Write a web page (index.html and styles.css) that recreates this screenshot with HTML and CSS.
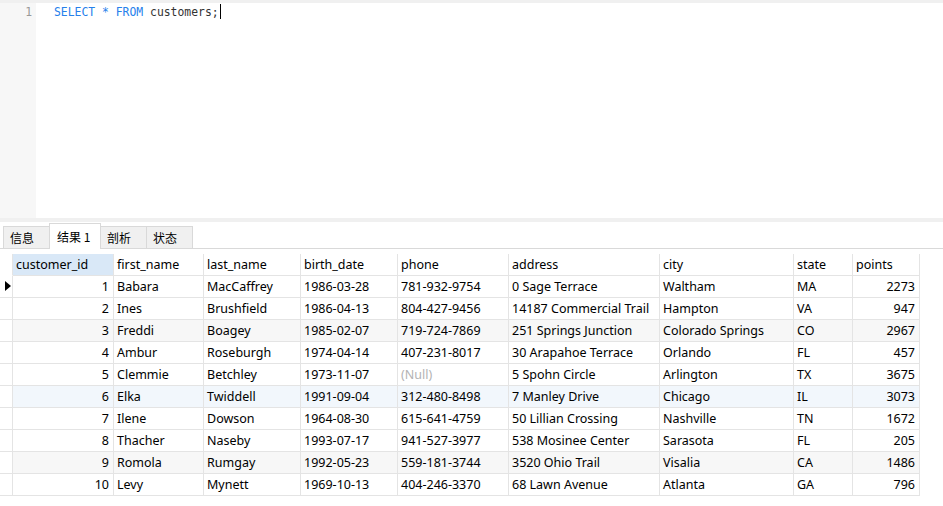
FILE: index.html
```html
<!DOCTYPE html>
<html>
<head>
<meta charset="utf-8">
<link rel="stylesheet" href="styles.css">
</head>
<body>
<div class="app">
  <div class="editor">
    <div class="gutter"><span class="ln">1</span></div>
    <div class="code"><span class="kw">SELECT</span> <span class="kw">*</span> <span class="kw">FROM</span> <span class="id">customers;</span><span class="caret"></span></div>
  </div>
  <div class="splitter"></div>
  <div class="tabbar">
    <div class="tab">信息</div>
    <div class="tab active">结果 1</div>
    <div class="tab">剖析</div>
    <div class="tab">状态</div>
  </div>
  <div class="grid-wrap">
    <div class="grid">
      <div class="row head">
        <div class="c ind"></div>
        <div class="c w1 sel">customer_id</div>
        <div class="c w2">first_name</div>
        <div class="c w3">last_name</div>
        <div class="c w4">birth_date</div>
        <div class="c w5">phone</div>
        <div class="c w6">address</div>
        <div class="c w7">city</div>
        <div class="c w8">state</div>
        <div class="c w9">points</div>
      </div>
      <div class="row">
        <div class="c ind"><span class="tri"></span></div>
        <div class="c w1 num">1</div><div class="c w2">Babara</div><div class="c w3">MacCaffrey</div><div class="c w4">1986-03-28</div><div class="c w5">781-932-9754</div><div class="c w6">0 Sage Terrace</div><div class="c w7">Waltham</div><div class="c w8">MA</div><div class="c w9 num">2273</div>
      </div>
      <div class="row">
        <div class="c ind"></div>
        <div class="c w1 num">2</div><div class="c w2">Ines</div><div class="c w3">Brushfield</div><div class="c w4">1986-04-13</div><div class="c w5">804-427-9456</div><div class="c w6">14187 Commercial Trail</div><div class="c w7">Hampton</div><div class="c w8">VA</div><div class="c w9 num">947</div>
      </div>
      <div class="row alt">
        <div class="c ind"></div>
        <div class="c w1 num">3</div><div class="c w2">Freddi</div><div class="c w3">Boagey</div><div class="c w4">1985-02-07</div><div class="c w5">719-724-7869</div><div class="c w6">251 Springs Junction</div><div class="c w7">Colorado Springs</div><div class="c w8">CO</div><div class="c w9 num">2967</div>
      </div>
      <div class="row">
        <div class="c ind"></div>
        <div class="c w1 num">4</div><div class="c w2">Ambur</div><div class="c w3">Roseburgh</div><div class="c w4">1974-04-14</div><div class="c w5">407-231-8017</div><div class="c w6">30 Arapahoe Terrace</div><div class="c w7">Orlando</div><div class="c w8">FL</div><div class="c w9 num">457</div>
      </div>
      <div class="row">
        <div class="c ind"></div>
        <div class="c w1 num">5</div><div class="c w2">Clemmie</div><div class="c w3">Betchley</div><div class="c w4">1973-11-07</div><div class="c w5 null">(Null)</div><div class="c w6">5 Spohn Circle</div><div class="c w7">Arlington</div><div class="c w8">TX</div><div class="c w9 num">3675</div>
      </div>
      <div class="row hover">
        <div class="c ind"></div>
        <div class="c w1 num">6</div><div class="c w2">Elka</div><div class="c w3">Twiddell</div><div class="c w4">1991-09-04</div><div class="c w5">312-480-8498</div><div class="c w6">7 Manley Drive</div><div class="c w7">Chicago</div><div class="c w8">IL</div><div class="c w9 num">3073</div>
      </div>
      <div class="row">
        <div class="c ind"></div>
        <div class="c w1 num">7</div><div class="c w2">Ilene</div><div class="c w3">Dowson</div><div class="c w4">1964-08-30</div><div class="c w5">615-641-4759</div><div class="c w6">50 Lillian Crossing</div><div class="c w7">Nashville</div><div class="c w8">TN</div><div class="c w9 num">1672</div>
      </div>
      <div class="row">
        <div class="c ind"></div>
        <div class="c w1 num">8</div><div class="c w2">Thacher</div><div class="c w3">Naseby</div><div class="c w4">1993-07-17</div><div class="c w5">941-527-3977</div><div class="c w6">538 Mosinee Center</div><div class="c w7">Sarasota</div><div class="c w8">FL</div><div class="c w9 num">205</div>
      </div>
      <div class="row alt">
        <div class="c ind"></div>
        <div class="c w1 num">9</div><div class="c w2">Romola</div><div class="c w3">Rumgay</div><div class="c w4">1992-05-23</div><div class="c w5">559-181-3744</div><div class="c w6">3520 Ohio Trail</div><div class="c w7">Visalia</div><div class="c w8">CA</div><div class="c w9 num">1486</div>
      </div>
      <div class="row">
        <div class="c ind"></div>
        <div class="c w1 num">10</div><div class="c w2">Levy</div><div class="c w3">Mynett</div><div class="c w4">1969-10-13</div><div class="c w5">404-246-3370</div><div class="c w6">68 Lawn Avenue</div><div class="c w7">Atlanta</div><div class="c w8">GA</div><div class="c w9 num">796</div>
      </div>
    </div>
  </div>
</div>
</body>
</html>
```

FILE: styles.css
```css
html, body {
  margin: 0;
  padding: 0;
  background: #ffffff;
}
body {
  width: 943px;
  height: 506px;
  overflow: hidden;
  font-family: "Noto Sans", "Noto Sans CJK SC", sans-serif;
  font-size: 12.5px;
  color: #000;
}
.app {
  display: flex;
  flex-direction: column;
}
.editor {
  height: 215px;
  border-top: 3px solid #f0f0f0;
  display: flex;
  background: #fff;
}
.gutter {
  width: 36px;
  background: #f7f7f7;
  display: flex;
  justify-content: flex-end;
  align-items: flex-start;
}
.ln {
  font-family: "DejaVu Sans Mono", monospace;
  font-size: 11.4px;
  color: #999;
  line-height: 18px;
  margin-right: 4px;
}
.code {
  display: block;
  padding-left: 18px;
  font-family: "DejaVu Sans Mono", monospace;
  font-size: 11.4px;
  line-height: 18px;
  color: #333;
  white-space: pre;
}
.kw { color: #2680eb; }
.id { color: #333; }
.caret {
  display: inline-block;
  width: 1px;
  height: 15px;
  background: #000;
  vertical-align: -3px;
  margin-left: 1px;
}
.splitter {
  height: 4px;
  background: #f0f0f0;
}
.tabbar {
  display: flex;
  align-items: flex-end;
  height: 26px;
  border-bottom: 1px solid #d9d9d9;
  padding-left: 3px;
  background: #fff;
}
.tab {
  box-sizing: border-box;
  height: 22px;
  padding: 0 6px;
  border: 1px solid #d9d9d9;
  border-bottom: none;
  margin-right: -1px;
  background: #f0f0f0;
  font-family: "Noto Sans CJK SC", sans-serif;
  font-size: 12px;
  line-height: 21px;
  color: #000;
  width: 47px;
}
.tab.active {
  background: #fff;
  width: 52px;
  line-height: 25px;
  padding-left: 7px;
  margin-bottom: -1px;
  height: 26px;
}
.grid-wrap {
  padding-top: 5px;
}
.grid {
  display: flex;
  flex-direction: column;
}
.row {
  display: flex;
  height: 22px;
}
.c {
  box-sizing: border-box;
  height: 22px;
  border-right: 1px solid #e4e4e4;
  border-bottom: 1px solid #e4e4e4;
  padding: 0 3px;
  line-height: 21px;
  white-space: nowrap;
  overflow: hidden;
}
.ind { width: 13px; padding: 0; position: relative; }
.head .ind { border-right: 1px solid #e4e4e4; border-bottom-color: transparent; }
.w1 { width: 101px; }
.w2 { width: 90px; }
.w3 { width: 97px; }
.w4 { width: 97px; }
.w5 { width: 111px; }
.w6 { width: 151px; }
.w7 { width: 134px; }
.w8 { width: 59px; }
.w9 { width: 67px; }
.num { text-align: right; padding-right: 4px; }
.head .sel { background: #d9e8f7; }
.alt .c { background: #f7f7f7; }
.hover .c { background: #f2f7fc; }
.row .ind { background: #fff; }
.null { color: #b3b3b3; }
.tri {
  position: absolute;
  left: 5px;
  top: 5px;
  width: 0;
  height: 0;
  border-top: 5px solid transparent;
  border-bottom: 5px solid transparent;
  border-left: 6px solid #000;
}
```
